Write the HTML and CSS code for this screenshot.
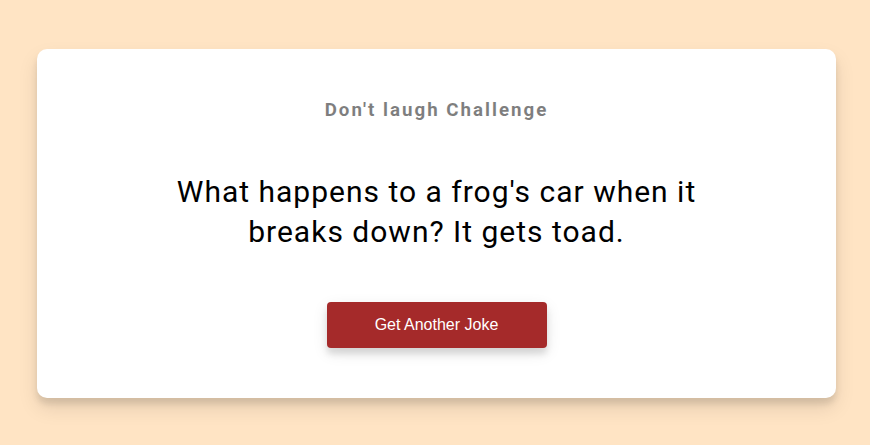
FILE: index.html
```html
<!DOCTYPE html>
<html lang="en">
<head>
<meta charset="UTF-8">
<title>Dad Jokes</title>
<link rel="stylesheet" href="styles.css">
</head>
<body>
  <div class="container">
    <h3 class="title">Don't laugh Challenge</h3>
    <div class="joke">What happens to a frog's car when it breaks down? It gets toad.</div>
    <button class="btn">Get Another Joke</button>
  </div>
</body>
</html>
```
FILE: styles.css
```css
* {
  box-sizing: border-box;
}

html, body {
  margin: 0;
}

body {
  background-color: #ffe4c4;
  font-family: Roboto, "Liberation Sans", sans-serif;
  display: flex;
  flex-direction: column;
  align-items: center;
  justify-content: center;
  height: 100vh;
  overflow: hidden;
  padding: 1px 0 0 3px;
}

.container {
  background-color: #fff;
  border-radius: 10px;
  box-shadow: 0 10px 20px rgba(0, 0, 0, 0.1), 0 6px 6px rgba(0, 0, 0, 0.1);
  padding: 50px 20px;
  text-align: center;
  width: 799px;
}

.title {
  margin: 0;
  font-size: 18.72px;
  line-height: 23px;
  font-weight: 700;
  opacity: 0.5;
  letter-spacing: 2px;
}

.joke {
  font-size: 30px;
  letter-spacing: 1px;
  line-height: 40px;
  margin: 50px auto;
  max-width: 600px;
}

.btn {
  background-color: #a52a2a;
  color: #fff;
  border: 0;
  border-radius: 4px;
  box-shadow: 0 5px 15px rgba(0, 0, 0, 0.1), 0 6px 6px rgba(0, 0, 0, 0.1);
  width: 220px;
  padding: 14px 0;
  font-family: "Liberation Sans", Arial, sans-serif;
  font-size: 16px;
  cursor: pointer;
}
```
